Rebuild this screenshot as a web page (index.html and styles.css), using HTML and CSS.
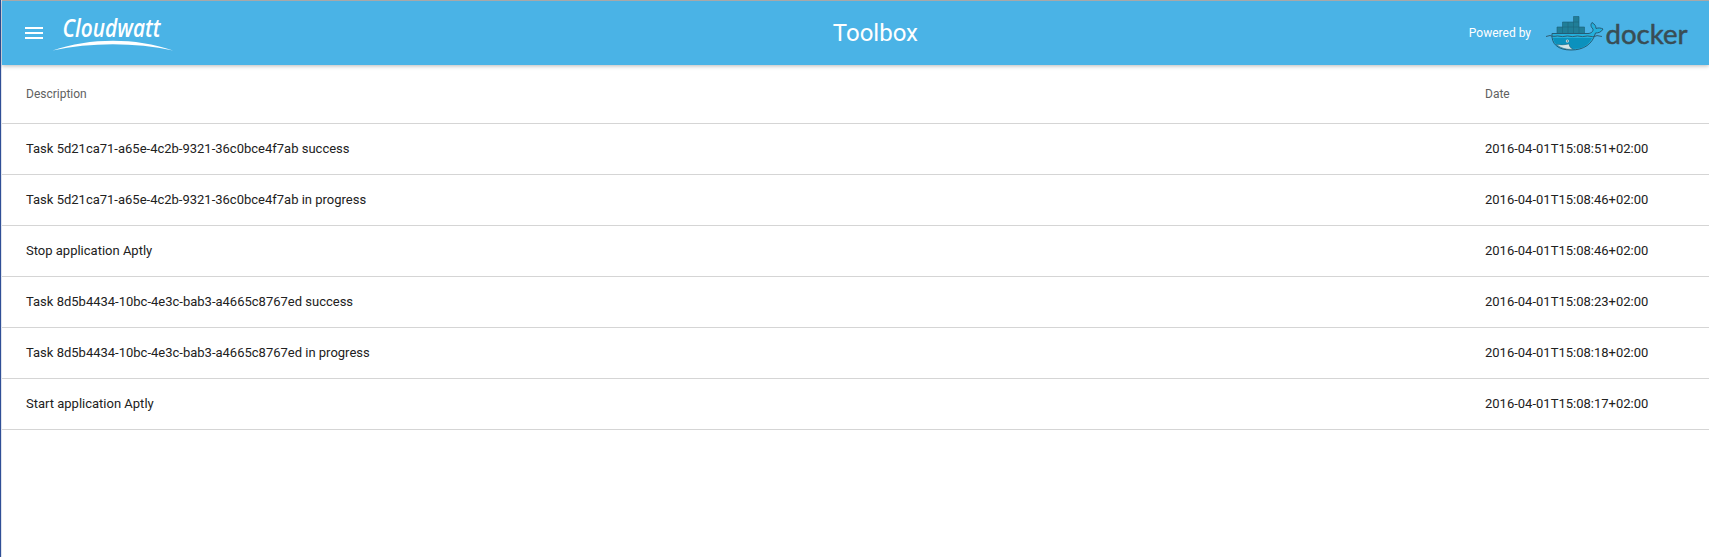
FILE: index.html
```html
<!DOCTYPE html>
<html lang="en">
<head>
<meta charset="utf-8">
<title>Toolbox</title>
<link rel="stylesheet" href="styles.css">
</head>
<body>
<div class="app">
  <header class="toolbar">
    <svg class="menu" viewBox="0 0 18 12"><path d="M0 1h18M0 6h18M0 11h18"/></svg>
    <svg class="cloudwatt" viewBox="0 -8 120 52">
      <text x="9.500" y="21.500" textLength="98" lengthAdjust="spacingAndGlyphs">Cloudwatt</text>
      <path d="M-.5 35.500C38 22.500 82 22.500 120 35.500C82 27.300 38 27.300 -.5 35.500Z"/>
    </svg>
    <h1 class="title">Toolbox</h1>
    <div class="powered">
      <span>Powered by</span>
      <svg class="docker" viewBox="0 0 144 38">
        <g class="boxes">
          <path d="M11 17.500V11H16.500V6H27.500V.5H33V11H38.500V17.500Z"/>
          <path class="seams" d="M16.500 11H33M16.500 11V17M22 6V17M27.500 6V17M33 11V17M27.500 6H33"/>
        </g>
        <path class="whale" d="M6 17.500H42C45 17.500 47.500 15.500 47 13C44.500 10.500 44.500 8.500 46 6.500C49 8.500 50 10 50 12.500C52.500 11.500 55 12 57 13C55.500 16 52.500 17 49.500 17C46.500 28 38 34 25 34C12 34 5 28 6 17.500Z"/>
        <path class="shade" d="M7 22H46C42 30 36 33 25 33C13.500 33 8 28.500 7 22Z"/>
        <path class="belly" d="M10.500 28.500Q17 29.500 23 28Q23 31.500 27 33.200Q17 34 10.500 28.500Z"/>
        <path class="wave" d="M0 20.500L4 19.500Q6 20.700 9 20.300Q11.500 19.600 14 20.300Q16.500 20.900 19 20.300Q21.500 19.600 24 20.300Q26.500 20.900 29 20.300Q31.500 19.600 34 20.300Q36.500 20.900 39 20.300Q41.500 19.600 44 20.300Q46.500 20.900 49 20.300L51 19.600L56 20.500"/>
        <circle class="eye" cx="21.300" cy="25" r="1.500"/>
        <circle class="pupil" cx="21.300" cy="25" r=".7"/>
        <text x="59.500" y="28" textLength="82" lengthAdjust="spacingAndGlyphs">docker</text>
      </svg>
    </div>
  </header>
  <table class="events">
    <thead><tr><th>Description</th><th class="date">Date</th></tr></thead>
    <tbody>
      <tr><td>Task 5d21ca71-a65e-4c2b-9321-36c0bce4f7ab success</td><td>2016-04-01T15:08:51+02:00</td></tr>
      <tr><td>Task 5d21ca71-a65e-4c2b-9321-36c0bce4f7ab in progress</td><td>2016-04-01T15:08:46+02:00</td></tr>
      <tr><td>Stop application Aptly</td><td>2016-04-01T15:08:46+02:00</td></tr>
      <tr><td>Task 8d5b4434-10bc-4e3c-bab3-a4665c8767ed success</td><td>2016-04-01T15:08:23+02:00</td></tr>
      <tr><td>Task 8d5b4434-10bc-4e3c-bab3-a4665c8767ed in progress</td><td>2016-04-01T15:08:18+02:00</td></tr>
      <tr><td>Start application Aptly</td><td>2016-04-01T15:08:17+02:00</td></tr>
    </tbody>
  </table>
</div>
</body>
</html>
```
FILE: styles.css
```css
* { box-sizing: border-box; }
body { margin: 0; background: #fff; font-family: Roboto, sans-serif; color: #212121; overflow: hidden; }
.app { height: 557px; border-left: 1px solid #2f4f97; padding-left: 1px; background: linear-gradient(90deg, #dfe3ec 1px, #fff 1px); }
.toolbar {
  display: grid; grid-template-columns: 18px 120px 1fr auto; align-items: center;
  height: 65px; padding: 0 19px 0 23px; background: #4ab3e6; color: #fff;
  border-top: 1px solid #a8a8a8; box-shadow: 0 1px 4px rgba(0,0,0,.28);
}
.menu { width: 18px; height: 12px; stroke: #fff; stroke-width: 2; }
.cloudwatt { width: 120px; height: 52px; margin-left: 10px; fill: #fff; overflow: visible; }
.cloudwatt text { font: italic 600 25px "Open Sans", sans-serif; }
.title { margin: 0 0 0 119px; text-align: center; font-size: 24px; font-weight: 400; line-height: 32px; }
.powered { display: flex; align-items: center; gap: 15px; font-size: 12px; line-height: 16px; }
.docker { width: 144px; height: 38px; margin-top: 3px; fill: none; stroke-linejoin: round; }
.docker text { font: 400 27px Lato, sans-serif; fill: #394d54; stroke: #394d54; stroke-width: .5; }
.boxes { fill: #207e98; stroke: #1c6077; stroke-width: .6; }
.seams { fill: none; stroke-width: .5; }
.whale { fill: #24b0dc; stroke: #245c75; stroke-width: 1; }
.shade { fill: #0b91bd; }
.belly { fill: #d2e5e8; stroke: #31596b; stroke-width: .4; }
.wave { stroke: #315d72; stroke-width: 1; }
.eye { fill: #d9e8eb; }
.pupil { fill: #394d54; }
.events { width: 100%; border-collapse: separate; border-spacing: 0; table-layout: fixed; text-align: left; }
th, td { padding: 0 0 0 24px; border-bottom: 1px solid #d5d5d5; }
th { height: 59px; font-size: 12px; font-weight: 400; color: #616161; }
td { height: 51px; padding-bottom: 1px; font-size: 13px; }
.date { width: 248px; }
```
